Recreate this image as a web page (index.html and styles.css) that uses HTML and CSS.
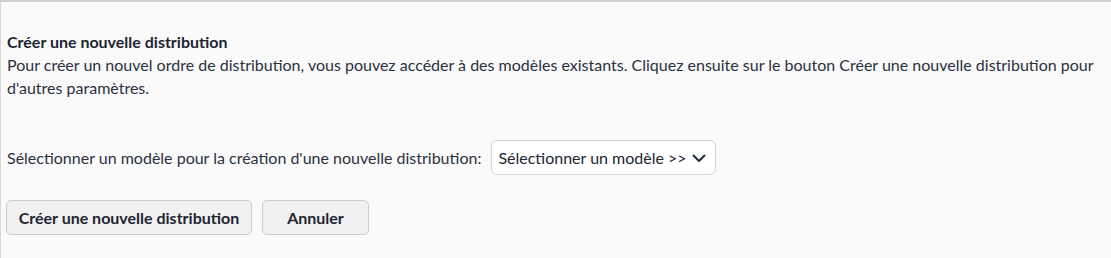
FILE: index.html
```html
<!DOCTYPE html>
<html lang="fr">
<head>
<meta charset="utf-8">
<link rel="stylesheet" href="styles.css">
</head>
<body>
<div class="panel">
  <div class="intro">
    <div class="title">Créer une nouvelle distribution</div>
    <p class="desc">Pour créer un nouvel ordre de distribution, vous pouvez accéder à des modèles existants. Cliquez ensuite sur le bouton Créer une nouvelle distribution pour d'autres paramètres.</p>
  </div>
  <div class="row">
    <span class="label">Sélectionner un modèle pour la création d'une nouvelle distribution:</span>
    <div class="select">
      <span>Sélectionner un modèle &gt;&gt;</span>
      <svg class="chev" width="14" height="9" viewBox="0 0 14 9"><path d="M1.5 1.5 L7 7 L12.5 1.5" fill="none" stroke="#1f2a3c" stroke-width="2" stroke-linecap="round" stroke-linejoin="round"/></svg>
    </div>
  </div>
  <div class="actions">
    <button class="btn btn-wide">Créer une nouvelle distribution</button>
    <button class="btn btn-cancel">Annuler</button>
  </div>
</div>
</body>
</html>
```
FILE: styles.css
```css
html, body {
  margin: 0;
  padding: 0;
  background: #fafafa;
}
body {
  font-family: "Lato", "Open Sans", sans-serif;
  font-size: 16px;
  color: #2a3140;
  width: 1111px;
  height: 258px;
  overflow: hidden;
}
.panel {
  height: 258px;
  box-sizing: border-box;
  border-left: 1px solid #d8d8d8;
  border-top: 2px solid #cfcfcf;
  padding: 28px 0 0 5px;
}
.intro {
  line-height: 23px;
  padding-left: 1px;
}
.title {
  font-weight: 700;
  color: #1e2533;
}
.desc {
  margin: 0;
  padding-right: 10px;
}
.row {
  display: flex;
  align-items: center;
  margin-top: 41px;
  padding-left: 1px;
  gap: 10px;
}
.select {
  display: flex;
  align-items: center;
  gap: 5px;
  height: 35px;
  box-sizing: border-box;
  padding: 0 9px 0 6px;
  border: 1px solid #d4d4d4;
  border-radius: 6px;
  background: #ffffff;
  color: #1e2533;
}
.chev {
  margin-top: 1px;
}
.actions {
  display: flex;
  gap: 10px;
  margin-top: 25px;
}
.btn {
  font-family: inherit;
  font-size: 16px;
  font-weight: 700;
  color: #1e2533;
  height: 35px;
  box-sizing: border-box;
  border: 1px solid #cccccc;
  border-radius: 5px;
  background: #f1f1f1;
  padding: 0 10px;
}
.btn-wide {
  width: 246px;
}
.btn-cancel {
  width: 107px;
}
```
